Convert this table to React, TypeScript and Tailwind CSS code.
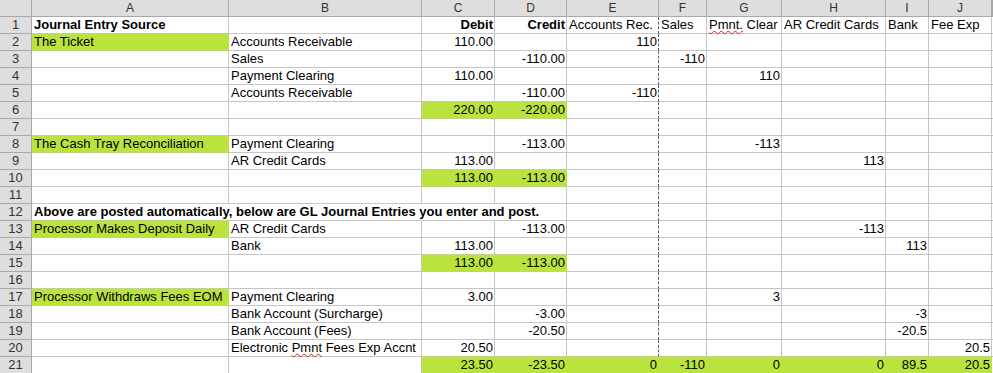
import React from 'react';

const letters = ['A', 'B', 'C', 'D', 'E', 'F', 'G', 'H', 'I', 'J'];

// one array per sheet row, columns A..J
const rows: string[][] = [
  ['Journal Entry Source', '', 'Debit', 'Credit', 'Accounts Rec.', 'Sales', 'Pmnt. Clear', 'AR Credit Cards', 'Bank', 'Fee Exp'],
  ['The Ticket', 'Accounts Receivable', '110.00', '', '110', '', '', '', '', ''],
  ['', 'Sales', '', '-110.00', '', '-110', '', '', '', ''],
  ['', 'Payment Clearing', '110.00', '', '', '', '110', '', '', ''],
  ['', 'Accounts Receivable', '', '-110.00', '-110', '', '', '', '', ''],
  ['', '', '220.00', '-220.00', '', '', '', '', '', ''],
  ['', '', '', '', '', '', '', '', '', ''],
  ['The Cash Tray Reconciliation', 'Payment Clearing', '', '-113.00', '', '', '-113', '', '', ''],
  ['', 'AR Credit Cards', '113.00', '', '', '', '', '113', '', ''],
  ['', '', '113.00', '-113.00', '', '', '', '', '', ''],
  ['', '', '', '', '', '', '', '', '', ''],
  ['Above are posted automatically, below are GL Journal Entries you enter and post.', '', '', '', '', '', '', '', '', ''],
  ['Processor Makes Deposit Daily', 'AR Credit Cards', '', '-113.00', '', '', '', '-113', '', ''],
  ['', 'Bank', '113.00', '', '', '', '', '', '113', ''],
  ['', '', '113.00', '-113.00', '', '', '', '', '', ''],
  ['', '', '', '', '', '', '', '', '', ''],
  ['Processor Withdraws Fees EOM', 'Payment Clearing', '3.00', '', '', '', '3', '', '', ''],
  ['', 'Bank Account (Surcharge)', '', '-3.00', '', '', '', '', '-3', ''],
  ['', 'Bank Account (Fees)', '', '-20.50', '', '', '', '', '-20.5', ''],
  ['', 'Electronic Pmnt Fees Exp Accnt', '20.50', '', '', '', '', '', '', '20.5'],
  ['', '', '23.50', '-23.50', '0', '-110', '0', '0', '89.5', '20.5'],
];

// lime fills, as "row,col" (row 1-based, col 0 = A)
const green = new Set([
  '2,0', '6,2', '6,3', '8,0', '10,2', '10,3', '13,0', '15,2', '15,3', '17,0',
  '21,2', '21,3', '21,4', '21,5', '21,6', '21,7', '21,8', '21,9',
]);

const bold = new Set(['1,0', '1,2', '1,3', '12,0']);

function CellText({ text }: { text: string }) {
  if (!text.includes('Pmnt')) return <>{text}</>;
  const word = text.includes('Pmnt.') ? 'Pmnt.' : 'Pmnt';
  const [before, after] = text.split(word);
  return (
    <>
      {before}
      <span className="underline decoration-wavy decoration-[#e0201b] decoration-[1px] underline-offset-[1px]">{word}</span>
      {after}
    </>
  );
}

export default function App() {
  const hdr = 'box-border border-r border-b border-[#a9a9a9] bg-[#dedede] text-[#333] text-center text-[12px] leading-[16px]';
  return (
    <div className="w-[993px] h-[373px] overflow-hidden bg-white font-['Liberation_Sans',Arial,sans-serif] text-black">
      <div className="grid grid-cols-[32px_197px_193px_73px_72px_92px_48px_75px_104px_43px_63px_1fr] auto-rows-[17px]">
        {/* column headers */}
        <div className={hdr} />
        {letters.map((l) => (
          <div key={l} className={hdr}>{l}</div>
        ))}
        <div className={hdr} />

        {rows.map((row, ri) => {
          const r = ri + 1;
          return (
            <React.Fragment key={r}>
              <div className={hdr + ' text-[13px]'}>{r}</div>
              {r === 12 ? (
                <div className="col-span-4 box-border border-r border-b border-[#c6c6c6] pl-[2px] text-[13px] leading-[16px] font-bold whitespace-nowrap">
                  {row[0]}
                </div>
              ) : null}
              {row.map((v, ci) => {
                if (r === 12 && ci < 4) return null;
                const key = `${r},${ci}`;
                const isGreen = green.has(key);
                const right = /^-?[\d.]+$/.test(v) || v === 'Debit' || v === 'Credit';
                const dashed = ci === 4 && !isGreen;
                return (
                  <div
                    key={ci}
                    className={[
                      'box-border border-r border-b pl-[2px] pr-[1px] text-[13px] leading-[16px] whitespace-nowrap',
                      isGreen ? 'bg-[#bbe33d] border-[#bbe33d]' : 'border-[#c6c6c6]',
                      dashed ? 'border-r-[#5f5f5f] [border-right-style:dashed]' : '',
                      right ? 'text-right' : 'text-left',
                      bold.has(key) ? 'font-bold' : '',
                    ].join(' ')}
                  >
                    <CellText text={v} />
                  </div>
                );
              })}
              <div className="box-border border-b border-[#c6c6c6]" />
            </React.Fragment>
          );
        })}
      </div>
    </div>
  );
}
